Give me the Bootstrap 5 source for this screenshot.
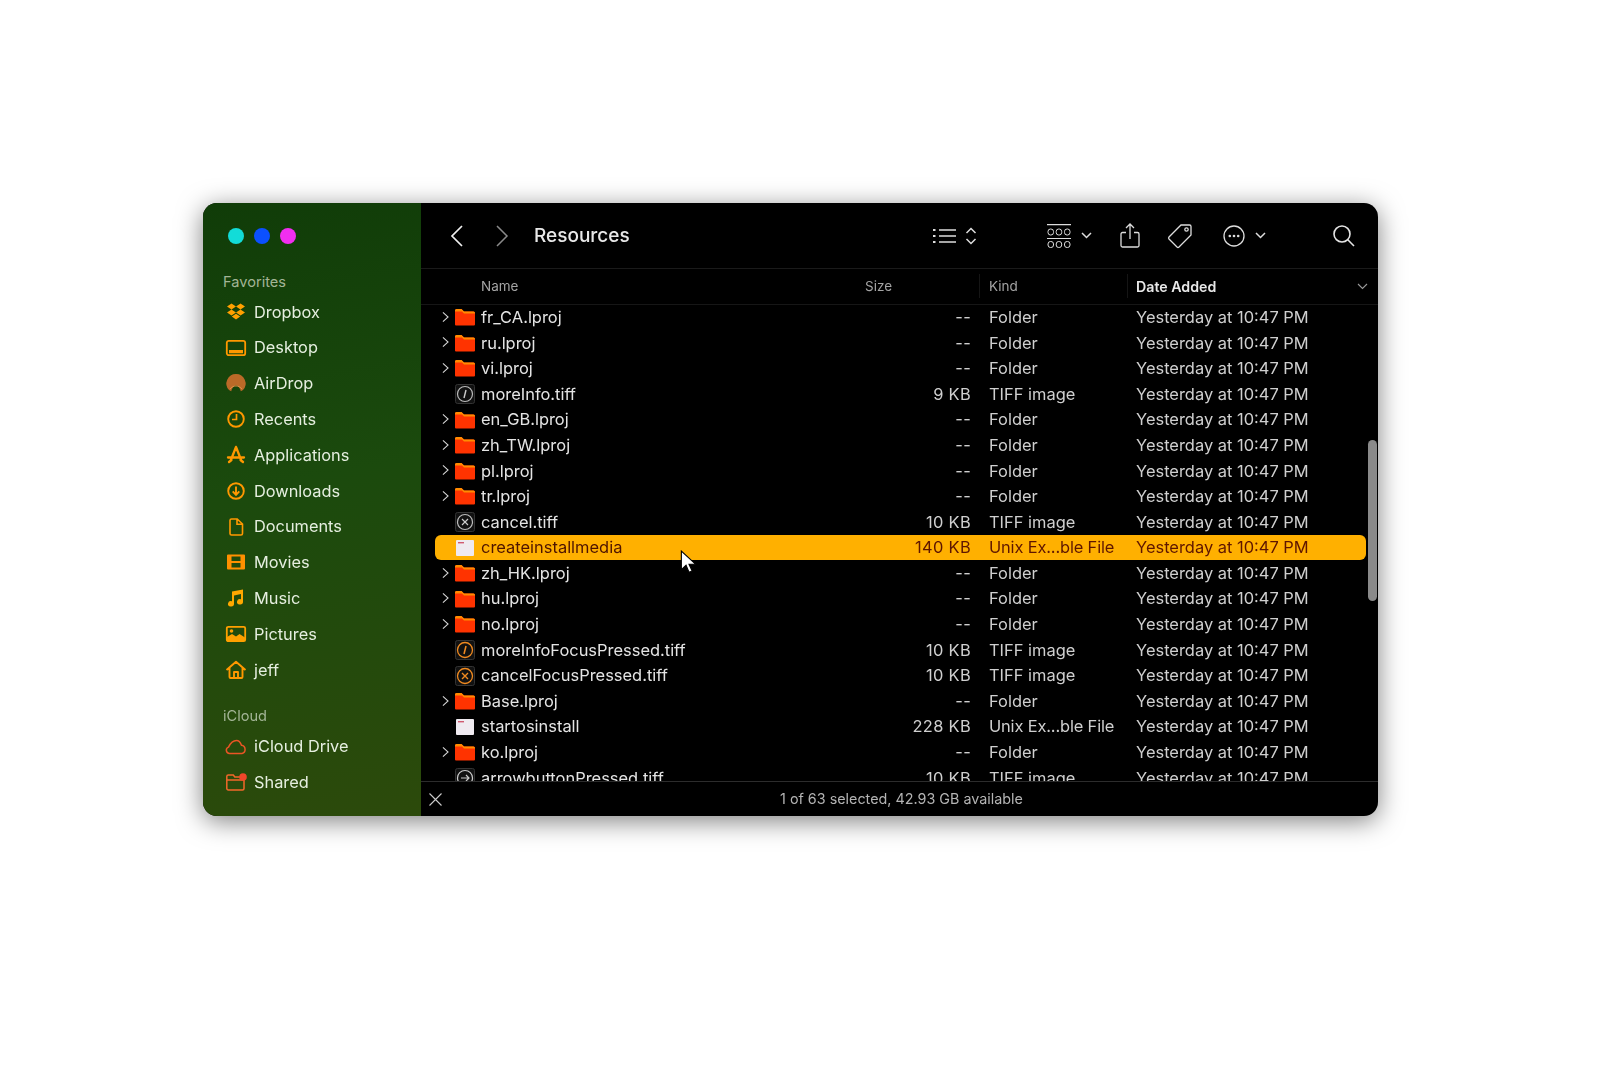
<!DOCTYPE html>
<html lang="en">
<head>
    <meta charset="UTF-8">
    <meta name="viewport" content="width=device-width, initial-scale=1">
    <title>Resources</title>
    <link href="https://cdn.jsdelivr.net/npm/bootstrap@5.3.0/dist/css/bootstrap.min.css" rel="stylesheet">
    <style>
        body { background: #fff; font-family: Inter, "Liberation Sans", sans-serif; padding: 203px 0 0 203px; }
        .finder { width: 1175px; height: 613px; border-radius: 14px; overflow: hidden; background: #000; box-shadow: 0 5px 26px rgba(0,0,0,.5); filter: blur(.35px); }
        .side { width: 218px; background: linear-gradient(170deg, #103c08 0%, #1b4a0d 45%, #2c4a0b 100%); color: #e6efe0; font-size: 16.35px; }
        .lights { height: 71px; padding: 25px 0 0 25px; gap: 10px; }
        .lights i { width: 16px; height: 16px; border-radius: 50%; }
        .side-head { font-size: 14.6px; color: #a3b596; padding-left: 20px; height: 16px; line-height: 16px; }
        .side-item { height: 35.8px; padding-left: 21px; }
        .side-item svg { width: 24px; height: 24px; margin-right: 6px; flex: none; }
        .main { color: #e4e4e4; min-width: 0; }
        .tools { height: 66px; border-bottom: 1px solid #1a1a1a; color: #e8e8e8; flex: none; }
        .tools svg { flex: none; }
        .title { font-size: 19px; font-weight: 500; margin-left: 25px; padding-top: 2px; color: #e8e8e8; }
        .cols { height: 35.5px; flex: none; border-bottom: 1px solid #161616; font-size: 13.5px; color: #a4a4a4; padding-left: 14px; }
        .cols b { font-weight: 600; color: #e8e8e8; font-size: 14.2px; }
        .rows { min-height: 0; }
        .frow { height: 25.6px; margin: 0 12px 0 14px; font-size: 16.45px; border-radius: 6px; white-space: nowrap; }
        .frow .size, .frow .kind, .frow .added { color: #cfcfcf; }
        .frow.picked { background: #ffb000; color: #4e1400; }
        .frow.picked .size, .frow.picked .kind, .frow.picked .added { color: #5e1600; }
        .c-arrow { width: 20px; flex: none; }
        .c-arrow svg { display: block; margin: -1px 0 0 -1px; }
        .c-icon { width: 20px; flex: none; margin-right: 6px; }
        .c-name { width: 330px; flex: none; }
        .size { width: 160px; flex: none; letter-spacing: .3px; }
        .kind { width: 147px; flex: none; margin-left: 18px; }
        .kind-long { letter-spacing: -.16px; }
        .added { flex: 1 1 auto; }
        .sep { border-left: 1px solid #151515; height: 24px; margin: 0 -1px 0 0; flex: none; }
        .thumb { position: absolute; right: 1px; top: 237px; width: 9px; height: 161px; background: #8a8a8a; border-radius: 5px; }
        .pointer { position: absolute; left: 259px; top: 347px; width: 18px; height: 24px; }
        .status { height: 35px; flex: none; border-top: 1px solid #2c2c2c; font-size: 14.35px; color: #b4b4b4; }
    </style>
</head>
<body>
    <svg width="0" height="0" class="d-block">
        <defs>
            <symbol id="arrow" viewBox="0 0 8 14"><path d="M1 1.500 7 7l-6 5.500" fill="none" stroke="#d8d8d8" stroke-width="1.200"/></symbol>
            <symbol id="folder" viewBox="0 0 20 18"><path d="M0 2.500A1.500 1.500 0 0 1 1.500 1h5L9 3.500h9.500A1.500 1.500 0 0 1 20 5v11.500a1 1 0 0 1-1 1H1a1 1 0 0 1-1-1z" fill="#ff3300"/><path d="M0 2.500A1.500 1.500 0 0 1 1.500 1h5L9 3.500h9.500A1.500 1.500 0 0 1 20 5v.5H9L7 3.500H0z" fill="#ff8c00"/></symbol>
            <symbol id="unix" viewBox="0 0 20 18"><rect x="1" y="1" width="18" height="16" rx="1" fill="#efeaf0"/><rect x="3" y="3" width="6" height="1.400" fill="#d05a70"/></symbol>
            <symbol id="t-info" viewBox="0 0 20 20"><rect x=".5" y=".5" width="19" height="19" rx="2" fill="#111" stroke="#333"/><circle cx="10" cy="10" r="7.500" fill="none" stroke="#bbb" stroke-width="1.200"/><path d="m11 6-2 8" stroke="#ccc" stroke-width="1.400"/></symbol>
            <symbol id="t-cancel" viewBox="0 0 20 20"><rect x=".5" y=".5" width="19" height="19" rx="2" fill="#111" stroke="#333"/><circle cx="10" cy="10" r="7.500" fill="none" stroke="#bbb" stroke-width="1.200"/><path d="m7 7 6 6m0-6-6 6" stroke="#ccc" stroke-width="1.200"/></symbol>
            <symbol id="t-info-o" viewBox="0 0 20 20"><rect x=".5" y=".5" width="19" height="19" rx="2" fill="#111" stroke="#333"/><circle cx="10" cy="10" r="7.500" fill="none" stroke="#f08a20" stroke-width="1.300"/><path d="m11 6-2 8" stroke="#f08a20" stroke-width="1.500"/></symbol>
            <symbol id="t-cancel-o" viewBox="0 0 20 20"><rect x=".5" y=".5" width="19" height="19" rx="2" fill="#111" stroke="#333"/><circle cx="10" cy="10" r="7.500" fill="none" stroke="#f08a20" stroke-width="1.300"/><path d="m7 7 6 6m0-6-6 6" stroke="#f08a20" stroke-width="1.400"/></symbol>
            <symbol id="t-go" viewBox="0 0 20 20"><rect x=".5" y=".5" width="19" height="19" rx="2" fill="#111" stroke="#333"/><circle cx="10" cy="10" r="7.500" fill="none" stroke="#ccc" stroke-width="1.200"/><path d="M6 10h8m-3-3 3 3-3 3" fill="none" stroke="#ccc" stroke-width="1.200"/></symbol>
        </defs>
    </svg>

    <div class="finder d-flex position-relative mb-5">
        <aside class="side flex-shrink-0">
            <div class="lights d-flex align-items-start">
                <i style="background:#12dcd8"></i><i style="background:#0b50ff"></i><i style="background:#f12ef0"></i>
            </div>
            <div class="side-head mb-1">Favorites</div>
            <div class="side-item d-flex align-items-center">
                <svg viewBox="0 0 24 24"><path fill="#ffa000" d="M7.500 3.500 12 6.500 7.500 9.500 3 6.500zM16.500 3.500 21 6.500 16.500 9.500 12 6.500zM7.500 9.500 12 12.500 7.500 15.500 3 12.500zM16.500 9.500 21 12.500 16.500 15.500 12 12.500zM7.800 16.500 12 13.800l4.200 2.700L12 19.500z"/></svg>Dropbox
            </div>
            <div class="side-item d-flex align-items-center">
                <svg viewBox="0 0 24 24"><rect x="2.800" y="4.800" width="18.400" height="14.400" rx="2" fill="none" stroke="#ff9800" stroke-width="1.800"/><rect x="5" y="14" width="14" height="3.300" fill="#ff9800"/></svg>Desktop
            </div>
            <div class="side-item d-flex align-items-center">
                <svg viewBox="0 0 24 24"><path fill="#bb6a28" d="M12 3a9.500 9.500 0 0 0-7 16l2.200 1.200a9 9 0 0 1 2.300-4.500 3.800 3.800 0 0 1 5 0 9 9 0 0 1 2.300 4.500L19 19A9.500 9.500 0 0 0 12 3z"/><path fill="none" stroke="#e89a50" stroke-width=".8" d="M6 18a7.500 7.500 0 0 1 12 0"/></svg>AirDrop
            </div>
            <div class="side-item d-flex align-items-center">
                <svg viewBox="0 0 24 24"><circle cx="12" cy="12" r="7.800" fill="none" stroke="#ff9800" stroke-width="1.900"/><path d="M12.500 7v5.500H8" fill="none" stroke="#ff9800" stroke-width="1.700"/></svg>Recents
            </div>
            <div class="side-item d-flex align-items-center">
                <svg viewBox="0 0 24 24"><path d="M12 4 6.500 18M12 4l5.500 14M4 14.500h16M5 19l2.500-2M19 19l-2.500-2" fill="none" stroke="#ff9800" stroke-width="2.300" stroke-linecap="round"/></svg>Applications
            </div>
            <div class="side-item d-flex align-items-center">
                <svg viewBox="0 0 24 24"><circle cx="12" cy="12" r="7.800" fill="none" stroke="#ff9800" stroke-width="1.900"/><path d="M12 7.500v8M8.700 12.300 12 15.800l3.300-3.500" fill="none" stroke="#ff9800" stroke-width="1.900"/></svg>Downloads
            </div>
            <div class="side-item d-flex align-items-center">
                <svg viewBox="0 0 24 24"><path d="M6 5.500A1.500 1.500 0 0 1 7.500 4h5.700L18.500 9v9.500A1.500 1.500 0 0 1 17 20H7.500A1.500 1.500 0 0 1 6 18.500zM13 4v5.200h5.500" fill="none" stroke="#ff9800" stroke-width="1.600"/></svg>Documents
            </div>
            <div class="side-item d-flex align-items-center">
                <svg viewBox="0 0 24 24"><path fill="#ff9000" fill-rule="evenodd" d="M3 5.500A1 1 0 0 1 4 4.500h16a1 1 0 0 1 1 1v13a1 1 0 0 1-1 1H4a1 1 0 0 1-1-1zM7.500 6.500v4.400h9V6.500zM7.500 13.100v4.400h9v-4.400z"/></svg>Movies
            </div>
            <div class="side-item d-flex align-items-center">
                <svg viewBox="0 0 24 24"><path fill="#ffa800" d="M19 3.500v12.300a3 2.700 0 1 1-2-2.500V8l-7 1.400v8.400a3 2.700 0 1 1-2-2.500V5.500z"/></svg>Music
            </div>
            <div class="side-item d-flex align-items-center">
                <svg viewBox="0 0 24 24"><rect x="2.800" y="4.800" width="18.400" height="14.400" rx="1.500" fill="none" stroke="#ffa000" stroke-width="1.800"/><path fill="#ffa000" d="M3 19v-4l5-3 4 2.500 3.500-2.500L21 15.500V19z"/><circle cx="7.500" cy="9" r="1.800" fill="#ffa000"/></svg>Pictures
            </div>
            <div class="side-item d-flex align-items-center">
                <svg viewBox="0 0 24 24"><path d="M2.500 12 12 3.800 21.500 12M5.500 10v9a1 1 0 0 0 1 1h11a1 1 0 0 0 1-1v-9M10 20v-6h4v6" fill="none" stroke="#ff9800" stroke-width="1.900" stroke-linejoin="round"/></svg>jeff
            </div>
            <div class="side-head" style="margin-top:20px;margin-bottom:5px">iCloud</div>
            <div class="side-item d-flex align-items-center">
                <svg viewBox="0 0 24 24"><path d="M7 18.500H5.500a3.300 3.300 0 0 1-1-6.400C6 9 9 5.500 12.500 5.500c2.500 0 4 2 5 4.800a4.200 4.200 0 0 1 .5 8.200z" fill="none" stroke="#ea5525" stroke-width="1.500"/></svg>iCloud Drive
            </div>
            <div class="side-item d-flex align-items-center">
                <svg viewBox="0 0 24 24"><path d="M2.800 6.500A1.500 1.500 0 0 1 4.300 5h5l1.500 2h9.200v11.500a1.500 1.500 0 0 1-1.500 1.500H4.300a1.500 1.500 0 0 1-1.500-1.500zM3 10h17" fill="none" stroke="#f2682a" stroke-width="1.500"/><circle cx="19" cy="7" r="3.800" fill="#f0462a"/></svg>Shared
            </div>
        </aside>

        <section class="main flex-grow-1 d-flex flex-column position-relative">
            <div class="tools d-flex align-items-center">
                <svg width="14" height="24" viewBox="0 0 14 24" style="margin-left:29px"><path d="M12 2 2 12l10 10" fill="none" stroke="#f0f0f0" stroke-width="1.700"/></svg>
                <svg width="14" height="24" viewBox="0 0 14 24" style="margin-left:31px"><path d="m2 2 10 10L2 22" fill="none" stroke="#8a8a8a" stroke-width="1.500"/></svg>
                <span class="title">Resources</span>
                <svg class="ms-auto" width="23" height="18" viewBox="0 0 23 18"><path d="M6 3h17M6 9h17M6 15h17" stroke="#ddd" stroke-width="1.300"/><path d="M0 3h2.500M0 9h2.500M0 15h2.500" stroke="#ddd" stroke-width="1.800"/></svg>
                <svg width="12" height="18" viewBox="0 0 12 18" style="margin-left:9px"><path d="m1.500 6 4.500-4.500L10.500 6M1.500 12 6 16.500l4.500-4.500" fill="none" stroke="#ddd" stroke-width="1.500"/></svg>
                <svg width="24" height="24" viewBox="0 0 24 24" style="margin-left:70px" fill="none" stroke="#ddd"><path d="M0 .7h24M0 14.500h24" stroke-width="1.200"/><rect x="1" y="5" width="5.500" height="6" rx="2.500"/><rect x="9.200" y="5" width="5.500" height="6" rx="2.500"/><rect x="17.500" y="5" width="5.500" height="6" rx="2.500"/><rect x="1" y="17.500" width="5.500" height="6" rx="2.500"/><rect x="9.200" y="17.500" width="5.500" height="6" rx="2.500"/><rect x="17.500" y="17.500" width="5.500" height="6" rx="2.500"/></svg>
                <svg width="11" height="7" viewBox="0 0 11 7" style="margin-left:10px"><path d="m1 1 4.500 4.500L10 1" fill="none" stroke="#ddd" stroke-width="1.500"/></svg>
                <svg width="20" height="25" viewBox="0 0 20 25" style="margin-left:28px" fill="none" stroke="#ddd" stroke-width="1.300"><path d="M6 9.500H2.500A1.500 1.500 0 0 0 1 11v11.500A1.500 1.500 0 0 0 2.500 24h15a1.500 1.500 0 0 0 1.500-1.500V11a1.500 1.500 0 0 0-1.500-1.500H14M10 16V1.500M6 5l4-4 4 4"/></svg>
                <svg width="26" height="26" viewBox="0 0 26 26" style="margin-left:27px" fill="none" stroke="#ddd" stroke-width="1.300"><path d="M14 2h8.500A1.500 1.500 0 0 1 24 3.500V12L12 24a1.500 1.500 0 0 1-2 0L2 16a1.500 1.500 0 0 1 0-2z"/><circle cx="19.500" cy="6.500" r="1.700"/></svg>
                <svg width="22" height="22" viewBox="0 0 22 22" style="margin-left:30px"><circle cx="11" cy="11" r="10" fill="none" stroke="#ddd" stroke-width="1.300"/><circle cx="6.800" cy="11" r="1.300" fill="#ddd"/><circle cx="11" cy="11" r="1.300" fill="#ddd"/><circle cx="15.200" cy="11" r="1.300" fill="#ddd"/></svg>
                <svg width="11" height="7" viewBox="0 0 11 7" style="margin-left:10px"><path d="m1 1 4.500 4.500L10 1" fill="none" stroke="#ddd" stroke-width="1.500"/></svg>
                <svg width="22" height="22" viewBox="0 0 22 22" style="margin:0 23px 0 67px" fill="none" stroke="#e4e4e4" stroke-width="1.600"><circle cx="9" cy="9" r="8"/><path d="m14.800 14.800 6.200 6.200"/></svg>
            </div>

            <div class="cols d-flex align-items-center">
                <span style="width:46px" class="flex-shrink-0"></span>
                <span style="width:384px" class="flex-shrink-0">Name</span>
                <span style="width:114px" class="flex-shrink-0">Size</span>
                <span class="sep"></span>
                <span style="width:148px;padding-left:10px" class="flex-shrink-0">Kind</span>
                <span class="sep"></span>
                <b class="flex-grow-1" style="padding-left:9px">Date Added</b>
                <svg width="11" height="7" viewBox="0 0 11 7" style="margin-right:10px"><path d="m1 1 4.500 4.500L10 1" fill="none" stroke="#999" stroke-width="1.100"/></svg>
            </div>

            <div class="rows flex-grow-1 overflow-hidden">
                <div class="frow d-flex align-items-center"><span class="c-arrow ps-2"><svg width="7" height="12"><use href="#arrow"/></svg></span><svg class="c-icon" height="18"><use href="#folder"/></svg><span class="c-name">fr_CA.lproj</span><span class="size text-end">--</span><span class="kind">Folder</span><span class="added">Yesterday at 10:47 PM</span></div>
                <div class="frow d-flex align-items-center"><span class="c-arrow ps-2"><svg width="7" height="12"><use href="#arrow"/></svg></span><svg class="c-icon" height="18"><use href="#folder"/></svg><span class="c-name">ru.lproj</span><span class="size text-end">--</span><span class="kind">Folder</span><span class="added">Yesterday at 10:47 PM</span></div>
                <div class="frow d-flex align-items-center"><span class="c-arrow ps-2"><svg width="7" height="12"><use href="#arrow"/></svg></span><svg class="c-icon" height="18"><use href="#folder"/></svg><span class="c-name">vi.lproj</span><span class="size text-end">--</span><span class="kind">Folder</span><span class="added">Yesterday at 10:47 PM</span></div>
                <div class="frow d-flex align-items-center"><span class="c-arrow"></span><svg class="c-icon" height="20"><use href="#t-info"/></svg><span class="c-name">moreInfo.tiff</span><span class="size text-end">9 KB</span><span class="kind">TIFF image</span><span class="added">Yesterday at 10:47 PM</span></div>
                <div class="frow d-flex align-items-center"><span class="c-arrow ps-2"><svg width="7" height="12"><use href="#arrow"/></svg></span><svg class="c-icon" height="18"><use href="#folder"/></svg><span class="c-name">en_GB.lproj</span><span class="size text-end">--</span><span class="kind">Folder</span><span class="added">Yesterday at 10:47 PM</span></div>
                <div class="frow d-flex align-items-center"><span class="c-arrow ps-2"><svg width="7" height="12"><use href="#arrow"/></svg></span><svg class="c-icon" height="18"><use href="#folder"/></svg><span class="c-name">zh_TW.lproj</span><span class="size text-end">--</span><span class="kind">Folder</span><span class="added">Yesterday at 10:47 PM</span></div>
                <div class="frow d-flex align-items-center"><span class="c-arrow ps-2"><svg width="7" height="12"><use href="#arrow"/></svg></span><svg class="c-icon" height="18"><use href="#folder"/></svg><span class="c-name">pl.lproj</span><span class="size text-end">--</span><span class="kind">Folder</span><span class="added">Yesterday at 10:47 PM</span></div>
                <div class="frow d-flex align-items-center"><span class="c-arrow ps-2"><svg width="7" height="12"><use href="#arrow"/></svg></span><svg class="c-icon" height="18"><use href="#folder"/></svg><span class="c-name">tr.lproj</span><span class="size text-end">--</span><span class="kind">Folder</span><span class="added">Yesterday at 10:47 PM</span></div>
                <div class="frow d-flex align-items-center"><span class="c-arrow"></span><svg class="c-icon" height="20"><use href="#t-cancel"/></svg><span class="c-name">cancel.tiff</span><span class="size text-end">10 KB</span><span class="kind">TIFF image</span><span class="added">Yesterday at 10:47 PM</span></div>
                <div class="frow picked d-flex align-items-center"><span class="c-arrow"></span><svg class="c-icon" height="18"><use href="#unix"/></svg><span class="c-name">createinstallmedia</span><span class="size text-end">140 KB</span><span class="kind kind-long">Unix Ex...ble File</span><span class="added">Yesterday at 10:47 PM</span></div>
                <div class="frow d-flex align-items-center"><span class="c-arrow ps-2"><svg width="7" height="12"><use href="#arrow"/></svg></span><svg class="c-icon" height="18"><use href="#folder"/></svg><span class="c-name">zh_HK.lproj</span><span class="size text-end">--</span><span class="kind">Folder</span><span class="added">Yesterday at 10:47 PM</span></div>
                <div class="frow d-flex align-items-center"><span class="c-arrow ps-2"><svg width="7" height="12"><use href="#arrow"/></svg></span><svg class="c-icon" height="18"><use href="#folder"/></svg><span class="c-name">hu.lproj</span><span class="size text-end">--</span><span class="kind">Folder</span><span class="added">Yesterday at 10:47 PM</span></div>
                <div class="frow d-flex align-items-center"><span class="c-arrow ps-2"><svg width="7" height="12"><use href="#arrow"/></svg></span><svg class="c-icon" height="18"><use href="#folder"/></svg><span class="c-name">no.lproj</span><span class="size text-end">--</span><span class="kind">Folder</span><span class="added">Yesterday at 10:47 PM</span></div>
                <div class="frow d-flex align-items-center"><span class="c-arrow"></span><svg class="c-icon" height="20"><use href="#t-info-o"/></svg><span class="c-name">moreInfoFocusPressed.tiff</span><span class="size text-end">10 KB</span><span class="kind">TIFF image</span><span class="added">Yesterday at 10:47 PM</span></div>
                <div class="frow d-flex align-items-center"><span class="c-arrow"></span><svg class="c-icon" height="20"><use href="#t-cancel-o"/></svg><span class="c-name">cancelFocusPressed.tiff</span><span class="size text-end">10 KB</span><span class="kind">TIFF image</span><span class="added">Yesterday at 10:47 PM</span></div>
                <div class="frow d-flex align-items-center"><span class="c-arrow ps-2"><svg width="7" height="12"><use href="#arrow"/></svg></span><svg class="c-icon" height="18"><use href="#folder"/></svg><span class="c-name">Base.lproj</span><span class="size text-end">--</span><span class="kind">Folder</span><span class="added">Yesterday at 10:47 PM</span></div>
                <div class="frow d-flex align-items-center"><span class="c-arrow"></span><svg class="c-icon" height="18"><use href="#unix"/></svg><span class="c-name">startosinstall</span><span class="size text-end">228 KB</span><span class="kind kind-long">Unix Ex...ble File</span><span class="added">Yesterday at 10:47 PM</span></div>
                <div class="frow d-flex align-items-center"><span class="c-arrow ps-2"><svg width="7" height="12"><use href="#arrow"/></svg></span><svg class="c-icon" height="18"><use href="#folder"/></svg><span class="c-name">ko.lproj</span><span class="size text-end">--</span><span class="kind">Folder</span><span class="added">Yesterday at 10:47 PM</span></div>
                <div class="frow d-flex align-items-center"><span class="c-arrow"></span><svg class="c-icon" height="20"><use href="#t-go"/></svg><span class="c-name">arrowbuttonPressed.tiff</span><span class="size text-end">10 KB</span><span class="kind">TIFF image</span><span class="added">Yesterday at 10:47 PM</span></div>
            </div>

            <div class="status d-flex align-items-center">
                <svg width="15" height="15" viewBox="0 0 15 15" style="margin-left:7px" class="flex-shrink-0"><path d="m1.500 1.500 12 12m0-12-12 12" stroke="#ccc" stroke-width="1.100"/></svg>
                <span class="flex-grow-1 text-center" style="padding-right:18px">1 of 63 selected, 42.93 GB available</span>
            </div>

            <div class="thumb"></div>
            <svg class="pointer" viewBox="0 0 16 22"><path d="M1 1v17l4.300-4 2.800 6.500 2.800-1.200L8 13l6 0z" fill="#fff" stroke="#000" stroke-width="1"/></svg>
        </section>
    </div>

    <script src="https://cdn.jsdelivr.net/npm/bootstrap@5.3.0/dist/js/bootstrap.bundle.min.js"></script>
</body>
</html>
